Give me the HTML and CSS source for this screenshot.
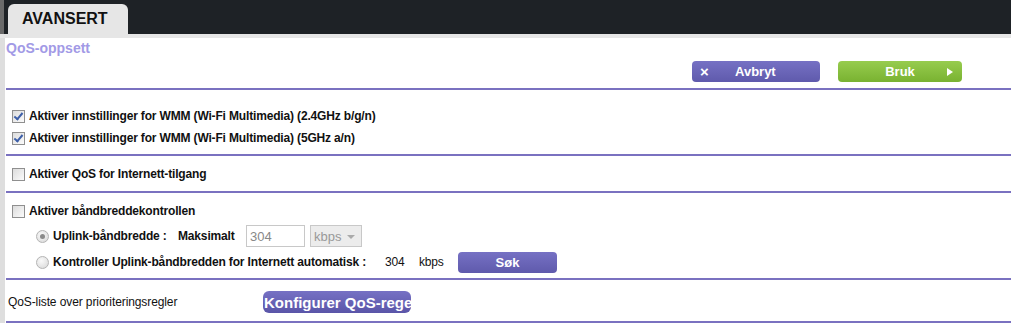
FILE: index.html
```html
<!DOCTYPE html>
<html>
<head>
    <title>QoS-oppsett</title>
    <link rel="stylesheet" href="styles.css">
</head>
<body>
    <div class="topbar">
        <div class="tab">AVANSERT</div>
    </div>
    <div class="band"></div>
    <div class="page">
        <h1 class="title">QoS-oppsett</h1>
        <div class="actions">
            <button class="btn btn--cancel"><span class="x">&#215;</span><span>Avbryt</span></button>
            <button class="btn btn--apply"><span>Bruk</span><span class="tri"></span></button>
        </div>

        <div class="section">
            <label class="row"><span class="check checked"></span>Aktiver innstillinger for WMM (Wi-Fi Multimedia) (2.4GHz b/g/n)</label>
            <label class="row"><span class="check checked"></span>Aktiver innstillinger for WMM (Wi-Fi Multimedia) (5GHz a/n)</label>
        </div>

        <div class="section">
            <label class="row"><span class="check"></span>Aktiver QoS for Internett-tilgang</label>
        </div>

        <div class="section section--bw">
            <label class="row"><span class="check"></span>Aktiver båndbreddekontrollen</label>
            <div class="row sub">
                <span class="radio selected"></span>
                <span class="lbl--uplink">Uplink-båndbredde :</span>
                <span class="lbl">Maksimalt</span>
                <span class="field">304</span>
                <span class="select">kbps<span class="arrow"></span></span>
            </div>
            <div class="row sub">
                <span class="radio"></span>
                <span class="lbl--auto">Kontroller Uplink-båndbredden for Internett automatisk :</span>
                <span class="plain plain--num">304</span>
                <span class="plain plain--unit">kbps</span>
                <button class="btn btn--search">Søk</button>
            </div>
        </div>

        <div class="section section--list">
            <span class="plain plain--list">QoS-liste over prioriteringsregler</span>
            <button class="btn btn--config">Konfigurer QoS-regel</button>
        </div>
    </div>
</body>
</html>
```

FILE: styles.css
```css
body {
    margin: 0;
    background: #fff;
    font-family: "Liberation Sans", Arial, sans-serif;
    overflow: hidden;
}

.topbar {
    height: 34px;
    background-color: #1e2226;
    border-left: 4px solid #6a6a6a;
    box-sizing: border-box;
    display: flex;
    align-items: flex-end;
    padding-left: 4px;
}

.tab {
    width: 120px;
    height: 30px;
    box-sizing: border-box;
    background-color: #e6e6e6;
    border-radius: 6px 6px 0 0;
    font-size: 16px;
    font-weight: bold;
    color: #111;
    padding: 6px 0 0 14px;
}

.band {
    height: 4px;
    background-color: #e6e6e6;
}

.page {
    border-left: 5px solid #dedede;
    padding-left: 1px;
}

.title {
    margin: 0;
    height: 22px;
    font-size: 14px;
    line-height: 18px;
    color: #a29ae6;
    padding-top: 1px;
}

.actions {
    display: flex;
    gap: 18px;
    padding-left: 686px;
    height: 27px;
    border-bottom: 2px solid #7a71c0;
}

.btn {
    border: none;
    border-radius: 4px;
    color: #fff;
    font-family: "Liberation Sans", Arial, sans-serif;
    font-weight: bold;
    font-size: 13px;
    padding: 0;
    cursor: pointer;
}

.btn--cancel {
    width: 128px;
    height: 21px;
    background: linear-gradient(to bottom, #7671c4, #5f5aac);
    display: flex;
    align-items: center;
    padding-left: 8px;
    box-sizing: border-box;
}

.btn--cancel .x {
    font-size: 15px;
    width: 35px;
    text-align: left;
}

.btn--apply {
    width: 124px;
    height: 21px;
    background: linear-gradient(to bottom, #97cc4e, #79b231);
    display: flex;
    align-items: center;
    justify-content: center;
    position: relative;
}

.tri {
    position: absolute;
    right: 9px;
    top: 7px;
    border-left: 6px solid #fff;
    border-top: 4px solid transparent;
    border-bottom: 4px solid transparent;
}

.section {
    border-bottom: 2px solid #7a71c0;
    padding: 10px 0 9px 6px;
    display: flex;
    flex-direction: column;
    gap: 6px;
}

.section:nth-of-type(2) {
    padding-top: 18px;
    padding-bottom: 8px;
}

.row {
    display: flex;
    align-items: center;
    height: 16px;
    font-size: 12px;
    font-weight: bold;
    letter-spacing: -0.16px;
    color: #111;
}

.check {
    width: 11px;
    height: 11px;
    border: 1px solid #8f8f8f;
    background: linear-gradient(135deg, #dcdcdc, #fbfbfb);
    margin-right: 4px;
    position: relative;
}

.check.checked::after {
    content: "";
    position: absolute;
    left: 3px;
    top: 0px;
    width: 3px;
    height: 7px;
    border-right: 2px solid #3d5fa8;
    border-bottom: 2px solid #3d5fa8;
    transform: rotate(40deg);
}

.section--bw {
    gap: 8px;
    padding-bottom: 7px;
}

.sub {
    padding-left: 24px;
    height: 18px;
}

.radio {
    width: 11px;
    height: 11px;
    border-radius: 50%;
    border: 1px solid #b4b4b4;
    background: radial-gradient(circle at 40% 35%, #fafafa, #d6d6d6);
    margin-right: 4px;
    position: relative;
}

.radio.selected::after {
    content: "";
    position: absolute;
    left: 3px;
    top: 3px;
    width: 5px;
    height: 5px;
    border-radius: 50%;
    background: #8a8a8a;
}

.lbl--uplink {
    width: 125px;
}

.lbl {
    width: 68px;
}

.field {
    width: 59px;
    height: 22px;
    box-sizing: border-box;
    border: 1px solid #c8c8c8;
    font-weight: normal;
    font-size: 13px;
    letter-spacing: 0;
    color: #888;
    padding: 3px 0 0 3px;
    margin-right: 5px;
}

.select {
    width: 52px;
    height: 22px;
    box-sizing: border-box;
    border: 1px solid #c8c8c8;
    background: #ececec;
    font-weight: normal;
    font-size: 13px;
    letter-spacing: 0;
    color: #999;
    padding: 3px 0 0 3px;
    position: relative;
}

.arrow {
    position: absolute;
    right: 6px;
    top: 9px;
    border-top: 4px solid #aaa;
    border-left: 4px solid transparent;
    border-right: 4px solid transparent;
}

.lbl--auto {
    width: 332px;
}

.plain {
    font-weight: normal;
    font-size: 12px;
    color: #111;
}

.plain--num {
    width: 34px;
}

.plain--unit {
    width: 39px;
}

.btn--search {
    width: 99px;
    height: 21px;
    background: linear-gradient(to bottom, #7671c4, #5f5aac);
    font-size: 13px;
    letter-spacing: 0;
}

.section--list {
    flex-direction: row;
    align-items: center;
    padding: 11px 0 8px 2px;
}

.plain--list {
    width: 249px;
    flex-shrink: 0;
    letter-spacing: -0.1px;
}

.btn--config {
    width: 148px;
    height: 22px;
    background: linear-gradient(to bottom, #7671c4, #5a55a8);
    font-size: 15px;
    border-radius: 6px;
    white-space: nowrap;
    overflow: hidden;
    text-align: left;
    padding-left: 1px;
}
```
